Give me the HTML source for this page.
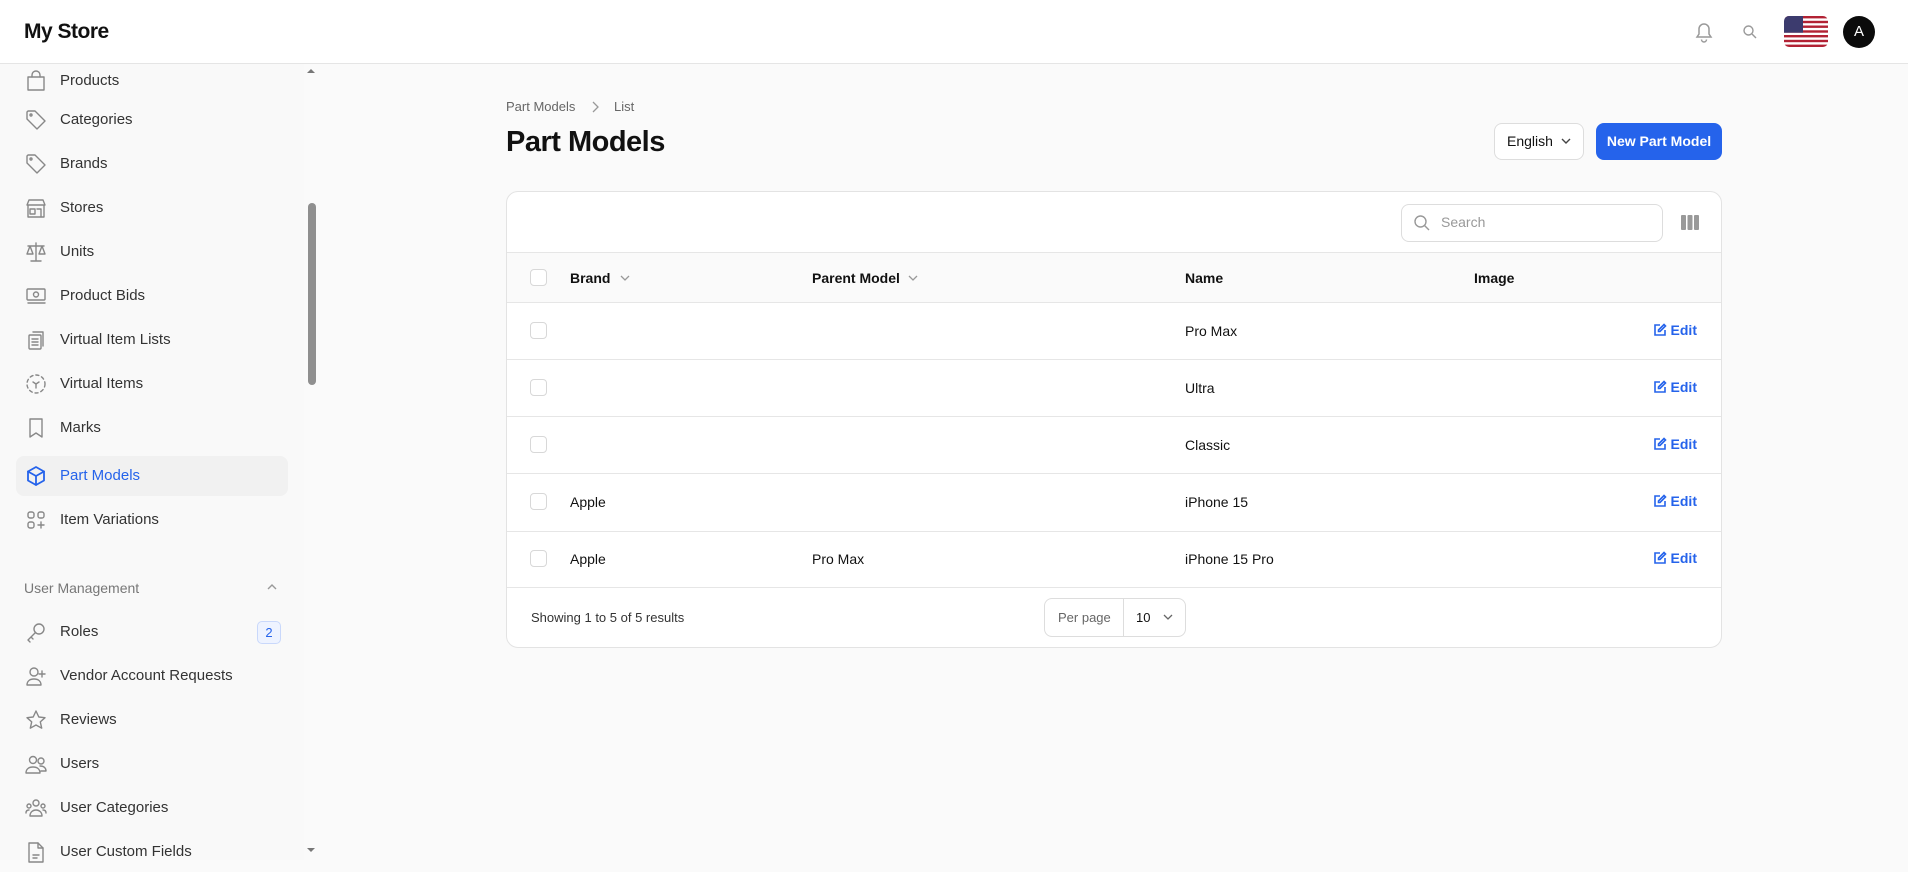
<!DOCTYPE html>
<html><head><meta charset="utf-8"><style>
*{box-sizing:border-box;margin:0;padding:0}
body{width:1908px;height:860px;overflow:hidden;background:#fafafa;font-family:"Liberation Sans",sans-serif;color:#111;position:relative}
.top{position:absolute;left:0;top:0;width:1908px;height:64px;background:#fff;border-bottom:1px solid #e5e5e5}
.logo{position:absolute;left:24px;top:20px;font-size:21px;font-weight:bold;letter-spacing:-0.5px}
.side{position:absolute;left:0;top:64px;width:304px;height:796px;background:#f9f9f9}
.item{position:absolute;left:16px;width:272px;height:40px;font-size:15px;color:#333}
.item svg{position:absolute;left:9px;top:9px;width:22px;height:22px;fill:none;stroke:#888;stroke-width:1.4;stroke-linecap:round;stroke-linejoin:round}
.item span{position:absolute;left:44px;top:11px}
.item.act{background:#f1f1f1;border-radius:8px}
.item.act span{color:#2563eb}
.item.act svg{stroke:#2563eb;stroke-width:1.8}
.sb{position:absolute;left:304px;top:64px;width:14px;height:796px;background:#fafafa}
.thumb{position:absolute;left:308px;top:203px;width:8px;height:182px;border-radius:4px;background:#8f8f8f}
.abs{position:absolute}
.card{position:absolute;left:506px;top:191px;width:1216px;height:457px;background:#fff;border:1px solid #e3e3e3;border-radius:12px;overflow:hidden}
.line{position:absolute;left:0;width:100%;height:1px;background:#e6e6e6}
.cb{position:absolute;width:17px;height:17px;border:1px solid #d8d8d8;border-radius:4px;background:#fff}
.t{position:absolute;font-size:14px}
.th{position:absolute;font-size:14px;font-weight:bold}
.edit{position:absolute;right:24px;font-size:14px;font-weight:bold;color:#2563eb}
.edit svg{vertical-align:-2px;margin-right:4px}
</style></head><body>
<div class="top">
<div class="logo">My Store</div>
<svg class="abs" style="left:1693px;top:20px" width="22" height="24" viewBox="0 0 22 24" fill="none" stroke="#999" stroke-width="1.5"><path d="M4 17h14l-2-3V9a5 5 0 0 0-10 0v5z"/><path d="M8.5 19.5a2.5 2.5 0 0 0 5 0"/></svg>
<svg class="abs" style="left:1742px;top:24px" width="16" height="16" viewBox="0 0 16 16" fill="none" stroke="#999" stroke-width="1.4"><circle cx="6.5" cy="6.5" r="4.5"/><path d="M10 10l4 4"/></svg>
<svg class="abs" style="left:1784px;top:16px" width="44" height="31" viewBox="0 0 44 31"><defs><clipPath id="f"><rect width="44" height="31" rx="5"/></clipPath></defs><g clip-path="url(#f)"><rect width="44" height="31" fill="#fff"/><g fill="#b22234"><rect y="0" width="44" height="2.4"/><rect y="4.8" width="44" height="2.4"/><rect y="9.5" width="44" height="2.4"/><rect y="14.3" width="44" height="2.4"/><rect y="19" width="44" height="2.4"/><rect y="23.8" width="44" height="2.4"/><rect y="28.6" width="44" height="2.4"/></g><rect width="19" height="16.7" fill="#3c3b6e"/></g></svg>
<div class="abs" style="left:1843px;top:16px;width:32px;height:32px;border-radius:50%;background:#0b0b0b;color:#fff;font-size:15px;text-align:center;line-height:32px">A</div>
</div>
<div class="side">
<div class="item" style="top:-3px"><svg viewBox="0 0 22 22"><path d="M3 7h16v13H3z"/><path d="M7 7V5a4 4 0 0 1 8 0v2"/></svg><span>Products</span></div>
<div class="item" style="top:36px"><svg viewBox="0 0 22 22"><path d="M2 3v7l10 10 8-8L10 2H3z"/><circle cx="6" cy="6" r="1"/></svg><span>Categories</span></div>
<div class="item" style="top:80px"><svg viewBox="0 0 22 22"><path d="M2 3v7l10 10 8-8L10 2H3z"/><circle cx="6" cy="6" r="1"/></svg><span>Brands</span></div>
<div class="item" style="top:124px"><svg viewBox="0 0 22 22"><path d="M2 8l2-5h14l2 5H2zM3 8v12h16V8"/><path d="M5 12h5v5H5zM12 12h4v8"/></svg><span>Stores</span></div>
<div class="item" style="top:168px"><svg viewBox="0 0 22 22"><path d="M11 2v18M6 20h10M3 5h16M5 5l-3 8h6zM17 5l-3 8h6z"/></svg><span>Units</span></div>
<div class="item" style="top:212px"><svg viewBox="0 0 22 22"><rect x="2" y="4" width="18" height="11" rx="1"/><circle cx="11" cy="9.5" r="2.5"/><path d="M3 18h17"/></svg><span>Product Bids</span></div>
<div class="item" style="top:256px"><svg viewBox="0 0 22 22"><rect x="4" y="6" width="12" height="14" rx="1"/><path d="M8 3h10v14M7 10h6M7 13h6M7 16h6"/></svg><span>Virtual Item Lists</span></div>
<div class="item" style="top:300px"><svg viewBox="0 0 22 22" stroke-dasharray="3 3"><circle cx="11" cy="11" r="9"/><path d="M8 9l3 2 3-2M11 11v4" stroke-dasharray="0"/></svg><span>Virtual Items</span></div>
<div class="item" style="top:344px"><svg viewBox="0 0 22 22"><path d="M5 2h12v18l-6-4-6 4z"/></svg><span>Marks</span></div>
<div class="item act" style="top:392px"><svg viewBox="0 0 22 22"><path d="M11 2l8 4.5v9L11 20l-8-4.5v-9z"/><path d="M3 6.5l8 4.5 8-4.5M11 11v9"/></svg><span>Part Models</span></div>
<div class="item" style="top:436px"><svg viewBox="0 0 22 22"><rect x="3" y="3" width="6" height="6" rx="2"/><rect x="13" y="3" width="6" height="6" rx="2"/><rect x="3" y="13" width="6" height="6" rx="2"/><path d="M16 13v6M13 16h6"/></svg><span>Item Variations</span></div>
<div class="abs" style="left:24px;top:516px;font-size:14px;color:#777">User Management</div>
<svg class="abs" style="left:266px;top:518px" width="12" height="10" viewBox="0 0 12 10" fill="none" stroke="#999" stroke-width="1.4"><path d="M2 7l4-4 4 4"/></svg>
<div class="item" style="top:548px"><svg viewBox="0 0 22 22"><circle cx="14" cy="8" r="5"/><path d="M10.5 11.5L3 19l2 2M6 16l2 2"/></svg><span>Roles</span></div>
<div class="abs" style="left:257px;top:557px;width:24px;height:23px;border:1px solid #c9d8fb;background:#eef3ff;border-radius:5px;font-size:13px;color:#2563eb;text-align:center;line-height:21px">2</div>
<div class="item" style="top:592px"><svg viewBox="0 0 22 22"><circle cx="9" cy="7" r="4"/><path d="M2 20c0-4 3-6 7-6s7 2 7 6zM17 6v6M14 9h6"/></svg><span>Vendor Account Requests</span></div>
<div class="item" style="top:636px"><svg viewBox="0 0 22 22"><path d="M11 2l2.8 6 6.2.7-4.7 4.2 1.4 6.3L11 16l-5.7 3.2 1.4-6.3L2 8.7 8.2 8z"/></svg><span>Reviews</span></div>
<div class="item" style="top:680px"><svg viewBox="0 0 22 22"><circle cx="8" cy="7" r="3.5"/><circle cx="16" cy="8" r="3"/><path d="M1 20c0-4 3-6 7-6s7 2 7 6zM15 13c4 0 6 2 6 5h-5"/></svg><span>Users</span></div>
<div class="item" style="top:724px"><svg viewBox="0 0 22 22"><circle cx="11" cy="6" r="3"/><circle cx="4" cy="9" r="2"/><circle cx="18" cy="9" r="2"/><path d="M5 19c0-4 3-6 6-6s6 2 6 6zM1 16c0-2 1-3 3-3M21 16c0-2-1-3-3-3"/></svg><span>User Categories</span></div>
<div class="item" style="top:768px"><svg viewBox="0 0 22 22"><path d="M4 2h9l5 5v14H4z"/><path d="M13 2v5h5M8 14h6M8 17h4"/></svg><span>User Custom Fields</span></div>
</div>
<div class="sb"></div>
<div class="thumb"></div>
<svg class="abs" style="left:306px;top:67px" width="10" height="8"><path d="M1 6l4-4 4 4z" fill="#777"/></svg>
<svg class="abs" style="left:306px;top:846px" width="10" height="8"><path d="M1 2l4 4 4-4z" fill="#777"/></svg>

<div class="abs" style="left:506px;top:99px;font-size:13px;color:#666">Part Models</div>
<svg class="abs" style="left:590px;top:100px" width="10" height="14" viewBox="0 0 10 14" fill="none" stroke="#999" stroke-width="1.3"><path d="M3 2l5 5-5 5"/></svg>
<div class="abs" style="left:614px;top:99px;font-size:13px;color:#666">List</div>
<div class="abs" style="left:506px;top:126px;font-size:29px;font-weight:bold;letter-spacing:-0.5px">Part Models</div>
<div class="abs" style="left:1494px;top:123px;width:90px;height:37px;background:#fff;border:1px solid #ddd;border-radius:8px;font-size:14px;line-height:35px;padding-left:12px">English</div>
<svg class="abs" style="left:1560px;top:136px" width="12" height="10" viewBox="0 0 12 10" fill="none" stroke="#444" stroke-width="1.4"><path d="M2 3l4 4 4-4"/></svg>
<div class="abs" style="left:1596px;top:123px;width:126px;height:37px;background:#2563eb;border-radius:8px;color:#fff;font-size:14px;font-weight:bold;text-align:center;line-height:37px">New Part Model</div>

<div class="card">
<div class="abs" style="left:894px;top:12px;width:262px;height:38px;border:1px solid #ddd;border-radius:8px"></div>
<svg class="abs" style="left:906px;top:22px" width="18" height="18" viewBox="0 0 18 18" fill="none" stroke="#999" stroke-width="1.4"><circle cx="7.5" cy="7.5" r="5.5"/><path d="M11.5 11.5l4.5 4.5"/></svg>
<div class="abs" style="left:934px;top:22px;font-size:14px;color:#999">Search</div>
<svg class="abs" style="left:1174px;top:23px" width="18" height="15" viewBox="0 0 18 15" fill="#999"><rect x="0" y="0" width="5" height="15" rx="1"/><rect x="6.5" y="0" width="5" height="15" rx="1"/><rect x="13" y="0" width="5" height="15" rx="1"/></svg>
<div class="line" style="top:60px"></div>
<div class="abs" style="left:0;top:61px;width:100%;height:49px;background:#fafafa"></div>
<div class="line" style="top:110px"></div>
<div class="cb" style="left:23px;top:77px"></div>
<div class="th" style="left:63px;top:78px">Brand</div>
<svg class="abs" style="left:112px;top:81px" width="12" height="10" viewBox="0 0 12 10" fill="none" stroke="#999" stroke-width="1.3"><path d="M2 3l4 4 4-4"/></svg>
<div class="th" style="left:305px;top:78px">Parent Model</div>
<svg class="abs" style="left:400px;top:81px" width="12" height="10" viewBox="0 0 12 10" fill="none" stroke="#999" stroke-width="1.3"><path d="M2 3l4 4 4-4"/></svg>
<div class="th" style="left:678px;top:78px">Name</div>
<div class="th" style="left:967px;top:78px">Image</div>

<div class="cb" style="left:23px;top:130px"></div><div class="t" style="left:678px;top:131px">Pro Max</div><div class="edit" style="top:130px"><svg width="14" height="14" viewBox="0 0 14 14" fill="none" stroke="#2563eb" stroke-width="1.6"><path d="M7 2H2v10h10V7"/><path d="M11 1.5l1.5 1.5L7 8.5H5.5V7z"/></svg>Edit</div>
<div class="line" style="top:167px"></div>
<div class="cb" style="left:23px;top:187px"></div><div class="t" style="left:678px;top:188px">Ultra</div><div class="edit" style="top:187px"><svg width="14" height="14" viewBox="0 0 14 14" fill="none" stroke="#2563eb" stroke-width="1.6"><path d="M7 2H2v10h10V7"/><path d="M11 1.5l1.5 1.5L7 8.5H5.5V7z"/></svg>Edit</div>
<div class="line" style="top:224px"></div>
<div class="cb" style="left:23px;top:244px"></div><div class="t" style="left:678px;top:245px">Classic</div><div class="edit" style="top:244px"><svg width="14" height="14" viewBox="0 0 14 14" fill="none" stroke="#2563eb" stroke-width="1.6"><path d="M7 2H2v10h10V7"/><path d="M11 1.5l1.5 1.5L7 8.5H5.5V7z"/></svg>Edit</div>
<div class="line" style="top:281px"></div>
<div class="cb" style="left:23px;top:301px"></div><div class="t" style="left:63px;top:302px">Apple</div><div class="t" style="left:678px;top:302px">iPhone 15</div><div class="edit" style="top:301px"><svg width="14" height="14" viewBox="0 0 14 14" fill="none" stroke="#2563eb" stroke-width="1.6"><path d="M7 2H2v10h10V7"/><path d="M11 1.5l1.5 1.5L7 8.5H5.5V7z"/></svg>Edit</div>
<div class="line" style="top:339px"></div>
<div class="cb" style="left:23px;top:358px"></div><div class="t" style="left:63px;top:359px">Apple</div><div class="t" style="left:305px;top:359px">Pro Max</div><div class="t" style="left:678px;top:359px">iPhone 15 Pro</div><div class="edit" style="top:358px"><svg width="14" height="14" viewBox="0 0 14 14" fill="none" stroke="#2563eb" stroke-width="1.6"><path d="M7 2H2v10h10V7"/><path d="M11 1.5l1.5 1.5L7 8.5H5.5V7z"/></svg>Edit</div>
<div class="line" style="top:395px"></div>
<div class="t" style="left:24px;top:418px;font-size:13px;color:#333">Showing 1 to 5 of 5 results</div>
<div class="abs" style="left:537px;top:406px;width:142px;height:39px;border:1px solid #ddd;border-radius:8px"></div>
<div class="abs" style="left:616px;top:406px;width:1px;height:39px;background:#ddd"></div>
<div class="t" style="left:551px;top:418px;font-size:13px;color:#666">Per page</div>
<div class="t" style="left:629px;top:418px;font-size:13px">10</div>
<svg class="abs" style="left:655px;top:420px" width="12" height="10" viewBox="0 0 12 10" fill="none" stroke="#666" stroke-width="1.3"><path d="M2 3l4 4 4-4"/></svg>
</div>
</body></html>
